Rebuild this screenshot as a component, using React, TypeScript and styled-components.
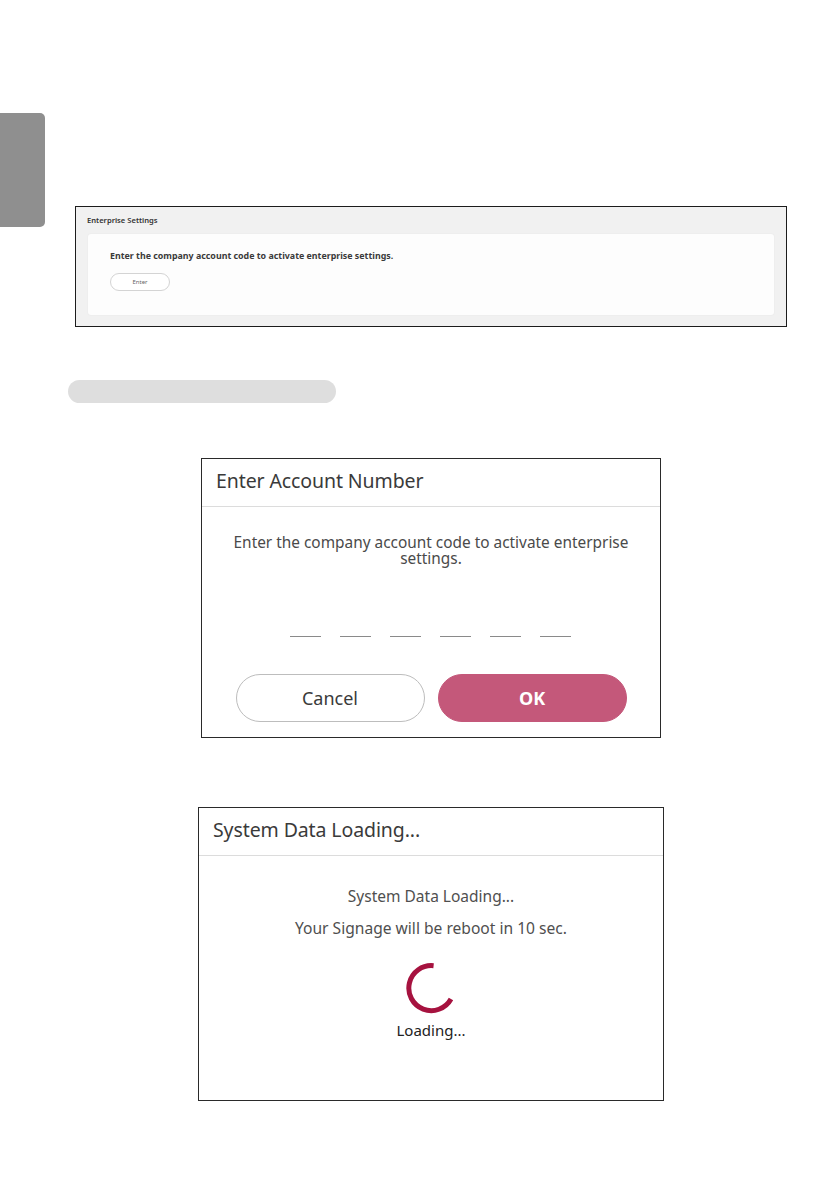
import React from 'react'
import styled, { createGlobalStyle } from 'styled-components'

const GlobalStyle = createGlobalStyle`
  html, body {
    margin: 0;
    padding: 0;
    background: #fff;
    overflow: hidden;
    scrollbar-width: none;
  }
  ::-webkit-scrollbar {
    width: 0;
    height: 0;
    display: none;
  }
  body {
    font-family: 'Noto Sans', 'Open Sans', sans-serif;
  }
`

const Page = styled.div`
  display: grid;
  grid-template-columns: 45px 772px;
  align-items: start;
  width: 839px;
  height: 1191px;
  overflow: hidden;
`

const SideTab = styled.div`
  margin-top: 113px;
  height: 114px;
  background: #8f8f8f;
  border-radius: 0 5px 5px 0;
`

const Content = styled.div`
  display: flex;
  flex-direction: column;
  align-items: center;
  padding-top: 206px;
`

/* enterprise settings panel */

const SettingsPanel = styled.div`
  box-sizing: border-box;
  width: 712px;
  height: 121px;
  border: 1px solid #1c1c1c;
  background: #f1f1f1;
  display: flex;
  flex-direction: column;
  padding: 8px 12px 11px 11px;
`

const PanelTitle = styled.div`
  font-size: 7.6px;
  font-weight: 600;
  color: #333;
  line-height: 10px;
  margin-bottom: 9px;
`

const PanelCard = styled.div`
  flex: 1;
  margin-left: 1px;
  background: #fdfdfd;
  border-radius: 3px;
  box-shadow: 0 0 2px rgba(0, 0, 0, 0.06);
  padding: 16px 22px 0;
  display: flex;
  flex-direction: column;
  align-items: flex-start;
`

const PanelText = styled.div`
  font-size: 8.85px;
  font-weight: 700;
  color: #3a3a3a;
  line-height: 12px;
`

const SmallPill = styled.div`
  margin-top: 11px;
  box-sizing: border-box;
  width: 60px;
  height: 18px;
  border: 1px solid #d4d4d4;
  border-radius: 9px;
  background: #fff;
  display: flex;
  align-items: center;
  justify-content: center;
  font-size: 6px;
  color: #666;
`

const LabelBar = styled.div`
  align-self: flex-start;
  margin: 53px 0 0 23px;
  width: 268px;
  height: 23px;
  border-radius: 12px;
  background: #dedede;
`

/* dialogs */

const Dialog = styled.div<{ $width: number; $height: number; $top: number }>`
  box-sizing: border-box;
  width: ${(p) => p.$width}px;
  height: ${(p) => p.$height}px;
  margin-top: ${(p) => p.$top}px;
  border: 1px solid #2a2a2a;
  background: #fff;
  display: flex;
  flex-direction: column;
`

const DialogHeader = styled.div`
  box-sizing: border-box;
  height: 48px;
  border-bottom: 1px solid #dcdcdc;
  display: flex;
  align-items: center;
  padding: 0 14px 4px;
  font-size: 19.5px;
  color: #3a3a3a;
  letter-spacing: -0.1px;
`

const DialogBody = styled.div<{ $pad: number }>`
  flex: 1;
  display: flex;
  flex-direction: column;
  align-items: center;
  padding-top: ${(p) => p.$pad}px;
`

const Message = styled.div`
  width: 400px;
  text-align: center;
  font-size: 15.4px;
  line-height: 16px;
  color: #4a4a4a;
`

const CodeRow = styled.div`
  display: flex;
  gap: 19px;
  margin-top: 69px;
  margin-right: 2px;
`

const CodeSlot = styled.div`
  width: 31px;
  height: 1px;
  background: #8a8a8a;
`

const ButtonRow = styled.div`
  display: flex;
  gap: 13px;
  margin-top: 37px;
`

const PillButton = styled.div<{ $primary?: boolean }>`
  box-sizing: border-box;
  width: 189px;
  height: 48px;
  border-radius: 24px;
  display: flex;
  align-items: center;
  justify-content: center;
  font-size: 18px;
  border: 1px solid ${(p) => (p.$primary ? '#c4587a' : '#bdbdbd')};
  background: ${(p) => (p.$primary ? '#c4587a' : '#fff')};
  color: ${(p) => (p.$primary ? '#fff' : '#3a3a3a')};
  font-weight: ${(p) => (p.$primary ? 700 : 400)};
`

const InfoLine = styled.div<{ $size: number; $gap: number }>`
  font-size: ${(p) => p.$size}px;
  line-height: 20px;
  color: #4f4f4f;
  margin-top: ${(p) => p.$gap}px;
`

const Spinner = styled.svg`
  margin-top: 24px;
  display: block;
`

const LoadingLabel = styled.div`
  font-size: 15px;
  line-height: 20px;
  color: #222;
  margin-top: 6px;
`

const App = () => {
  const slots = [0, 1, 2, 3, 4, 5]

  return (
    <>
      <GlobalStyle />
      <Page>
        <SideTab />
        <Content>
          <SettingsPanel>
            <PanelTitle>Enterprise Settings</PanelTitle>
            <PanelCard>
              <PanelText>
                Enter the company account code to activate enterprise settings.
              </PanelText>
              <SmallPill>Enter</SmallPill>
            </PanelCard>
          </SettingsPanel>

          <LabelBar />

          <Dialog $width={460} $height={280} $top={55}>
            <DialogHeader>Enter Account Number</DialogHeader>
            <DialogBody $pad={28}>
              <Message>
                Enter the company account code to activate enterprise settings.
              </Message>
              <CodeRow>
                {slots.map((s) => (
                  <CodeSlot key={s} />
                ))}
              </CodeRow>
              <ButtonRow>
                <PillButton>Cancel</PillButton>
                <PillButton $primary>OK</PillButton>
              </ButtonRow>
            </DialogBody>
          </Dialog>

          <Dialog $width={466} $height={294} $top={69}>
            <DialogHeader>System Data Loading...</DialogHeader>
            <DialogBody $pad={30}>
              <InfoLine $size={15.5} $gap={0}>
                System Data Loading...
              </InfoLine>
              <InfoLine $size={15.6} $gap={12}>
                Your Signage will be reboot in 10 sec.
              </InfoLine>
              <Spinner width="52" height="52" viewBox="0 0 52 52">
                <path
                  d="M 28.6 3.7 A 22.5 22.5 0 1 0 46 37"
                  fill="none"
                  stroke="#a6123f"
                  strokeWidth="5"
                />
              </Spinner>
              <LoadingLabel>Loading...</LoadingLabel>
            </DialogBody>
          </Dialog>
        </Content>
      </Page>
    </>
  )
}

export default App
